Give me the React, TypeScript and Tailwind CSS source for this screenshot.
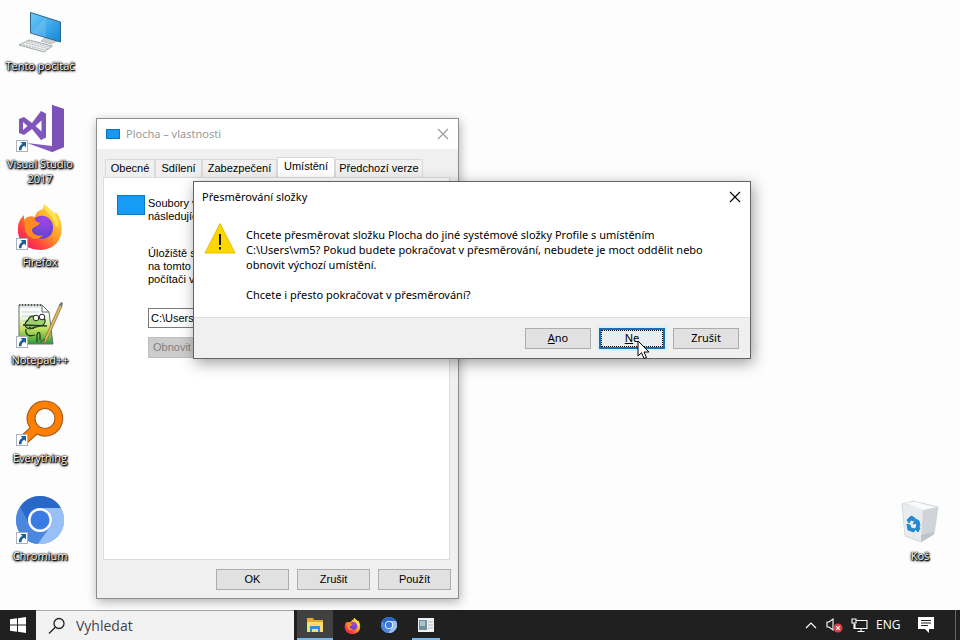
import type { ReactNode } from "react";

const UI_FONT = "font-['Noto_Sans','Open_Sans',sans-serif]";
const LABEL_FONT = "font-['Open_Sans','Noto_Sans',sans-serif]";
const CLASSIC_FONT = "font-['Liberation_Sans',Arial,sans-serif]";

function ShortcutArrow() {
  return (
    <svg viewBox="0 0 12 12" className="absolute bottom-0 left-0 size-3" aria-hidden="true">
      <rect x=".5" y=".5" width="11" height="11" fill="#fff" stroke="#a9b3bd" />
      <path d="M4.500 2h5.500v5.500L8.300 5.700C6.300 6.700 5.400 8 5.500 10.200H3C2.500 7.500 3.800 5.200 6.300 3.800Z" fill="#1f5f9c" />
    </svg>
  );
}

function DesktopIcon({ label, shortcut = true, children }: { label: string; shortcut?: boolean; children: ReactNode }) {
  return (
    <button type="button" className={`flex h-[98px] w-20 shrink-0 flex-col items-center gap-1 ${LABEL_FONT}`}>
      <span className="relative block size-12">
        {children}
        {shortcut && <ShortcutArrow />}
      </span>
      <span className="w-[74px] text-center text-[11px] leading-[15px] text-white [text-shadow:0_0_1px_#000,0_0_2px_#000,1px_1px_2px_#000,1px_1px_1px_#000,0_1px_3px_#000]">
        {label}
      </span>
    </button>
  );
}

function ComputerArt() {
  return (
    <svg viewBox="0 0 48 48" className="size-full" aria-hidden="true">
      <defs>
        <linearGradient id="screen" x1="0" y1="0" x2="1" y2="1">
          <stop offset="0" stopColor="#6ccbfb" />
          <stop offset="1" stopColor="#1487d8" />
        </linearGradient>
      </defs>
      <path d="M31 30l8 2 2 3-6 3-10-3Z" fill="#cdd2d2" stroke="#9aa0a2" strokeWidth=".6" />
      <path d="M14.500 6.500l30 9.500v20l-30-9Z" fill="url(#screen)" stroke="#28658d" strokeWidth="1" />
      <path d="M15 27L30 11.500v20Z" fill="#fff" opacity=".13" />
      <path d="M3 39l10-5 23.500 6-8.500 6Z" fill="#eceeee" stroke="#8d9699" strokeWidth=".8" />
      <path d="M7 39l22 5M10 37l22 5.500M12 35.500L34 41" stroke="#a9b0b2" strokeWidth=".8" strokeDasharray="2 1" fill="none" />
    </svg>
  );
}

function VisualStudioArt() {
  return (
    <svg viewBox="0 0 48 48" className="size-full" aria-hidden="true">
      <path d="M36 1l12 4v38l-12 5-25-9 25 3Z" fill="#8659bd" />
      <path d="M36 1l12 4v38l-12 5Z" fill="#7d52b8" />
      <path fillRule="evenodd" d="M3 15l5-2 8 6L25 7l5 2.500v24L25 36l-9-11-8 6-5-2Zm4 3v8l4.500-4Zm12.500 4 6 5.500v-11Z" fill="#8055b9" />
    </svg>
  );
}

function FirefoxArt({ id }: { id: string }) {
  return (
    <svg viewBox="0 0 48 48" className="size-full" aria-hidden="true">
      <defs>
        <linearGradient id={`${id}-body`} x1=".9" y1=".1" x2=".15" y2=".9">
          <stop offset="0" stopColor="#ffe23f" />
          <stop offset=".45" stopColor="#ff9a25" />
          <stop offset=".75" stopColor="#ff493c" />
          <stop offset="1" stopColor="#ed2065" />
        </linearGradient>
        <radialGradient id={`${id}-globe`} cx=".6" cy=".2" r=".9">
          <stop offset="0" stopColor="#a246e6" />
          <stop offset="1" stopColor="#5145cc" />
        </radialGradient>
      </defs>
      <path d="M28 2c3 5 8 6 10 11l2-3c10 12 8 37-15 38C8 48 1 37 2 26c0-6 3-10 6-13v5c3-4 7-4 11-3 1-5 4-7 8-8Z" fill={`url(#${id}-body)`} />
      <path d="M19 16c9-6 19 1 18 11-1 9-10 12-17 8-5-3-8-9-5-14Z" fill={`url(#${id}-globe)`} />
      <path d="M8 18c3-4 7-4 11-3-1 3 1 5 5 6-2 4-7 3-8 7 0 4 6 7 11 5-5 7-16 4-18-5Z" fill="#ff8b22" />
      <path d="M28 2c0 9 10 11 11 21l3 2C45 15 35 8 28 2Z" fill="#ffe44d" />
    </svg>
  );
}

function NotepadArt() {
  return (
    <svg viewBox="0 0 48 48" className="size-full" aria-hidden="true">
      <defs>
        <linearGradient id="page" x1="0" y1="0" x2="0" y2="1">
          <stop offset=".25" stopColor="#fbfdf8" />
          <stop offset=".65" stopColor="#b7dc55" />
          <stop offset="1" stopColor="#279a36" />
        </linearGradient>
      </defs>
      <path d="M3 5h23l7 7 4 32H3Z" fill="url(#page)" stroke="#68716b" />
      <path d="M26 5v7h7Z" fill="#fff" stroke="#666" />
      <path d="M4 7h21M6 12h17M6 16h12M6 21h7" stroke="#bcc8cf" strokeWidth=".8" />
      <path d="M3 5h23" stroke="#555" strokeWidth="2" strokeDasharray="1 2" />
      <path d="M12 20c2-5 7-5 9-1l5-2c4 1 4 6 1 8l-13 4c-6-1-6-6-2-9Z" fill="#9bd36a" stroke="#242d20" strokeWidth="1.2" />
      <circle cx="20" cy="18" r="2.800" fill="#fff" stroke="#222" />
      <circle cx="26" cy="17" r="2.800" fill="#fff" stroke="#222" />
      <path d="M7 25l24 1M10 29c-1 6 3 8 9 6M21 42v-7c1-4 3-3 3 0v5M13 27c2 2 4 2 6 0" stroke="#253421" fill="none" strokeWidth="1.300" />
      <path d="M44 4l2 2-15 34-3 4 1-6Z" fill="#e4b958" stroke="#86724a" strokeWidth=".8" />
      <path d="M43 5l2-3 2 1-1 4Z" fill="#777" />
      <path d="M24 42l5-3" stroke="#235e2b" />
    </svg>
  );
}

function EverythingArt() {
  return (
    <svg viewBox="0 0 48 48" className="size-full" aria-hidden="true">
      <path fillRule="evenodd" d="M29 3a17.500 17.500 0 1 1-8 33L10 46l-6-7 10-9A17.500 17.500 0 0 1 29 3Zm0 7.500a10 10 0 1 0 0 20 10 10 0 0 0 0-20Z" fill="#ff8000" stroke="#a45c20" strokeWidth="1.200" />
    </svg>
  );
}

function ChromiumArt() {
  return (
    <svg viewBox="0 0 48 48" className="size-full" aria-hidden="true">
      <circle cx="24" cy="24" r="24" fill="#5795eb" />
      <path d="M4 11A24 24 0 0 1 45 12H24a12 12 0 0 0-10 18Z" fill="#2968c9" />
      <path d="M4 11A24 24 0 0 0 21 48l13-17a12 12 0 0 1-20-1Z" fill="#4b87df" />
      <path d="M24 12h21A24 24 0 0 1 22 48l12-17a12 12 0 0 0-10-19Z" fill="#98bff6" />
      <circle cx="24" cy="24" r="12" fill="#fff" />
      <circle cx="24" cy="24" r="9.500" fill="#397be2" />
    </svg>
  );
}

function BinArt() {
  return (
    <svg viewBox="0 0 48 48" className="size-full" aria-hidden="true">
      <path d="M6 8l11-3 25 6-4 27-13 8-16-6Z" fill="#e4e7ea" stroke="#cbd0d4" strokeWidth=".8" />
      <path d="M7 8l20 6-2 31-16-6Z" fill="#e9ecee" />
      <path d="M27 14l15-3-4 27-13 7Z" fill="#d0d4d8" />
      <path d="M9 7l11-1 10 3 10 2-13 3Z" fill="#f9fafb" />
      <path d="M25 39l13-3-1 3-12 7Z" fill="#bfc4c9" />
      <path d="M11 24l4-4 4 2-1 3-3-1-2 3Zm9-1 3 2 1 5-3 1-1-4-3 1Zm-9 5 3 1 1 3 4 1-1 3-6-2Zm8 5 2-3 3 2-2 4Z" fill="#2589cf" stroke="#2589cf" />
    </svg>
  );
}

function CloseButton({ dim = false, label }: { dim?: boolean; label: string }) {
  return (
    <button type="button" aria-label={label} className={`grid h-[30px] w-[30px] place-items-center ${dim ? "text-[#9a9a9a]" : "text-black"}`}>
      <svg viewBox="0 0 12 12" className="size-3" aria-hidden="true">
        <path d="M1 1l10 10M11 1L1 11" stroke="currentColor" strokeWidth="1.100" />
      </svg>
    </button>
  );
}

const TABS = [
  { name: "Obecné", width: "w-[50px]" },
  { name: "Sdílení", width: "w-[47px]" },
  { name: "Zabezpečení", width: "w-[75px]" },
  { name: "Umístění", width: "w-[58px]", active: true },
  { name: "Předchozí verze", width: "w-[88px]" },
];

function PropertiesWindow() {
  return (
    <section aria-label="Plocha – vlastnosti" className={`absolute top-[118px] left-24 flex h-[481px] w-[363px] flex-col border border-[#8e8e8e] bg-[#f0f0f0] text-[11px] text-black shadow-[1px_3px_10px_rgba(0,0,0,.3)] ${CLASSIC_FONT}`}>
      <header className={`flex h-[30px] shrink-0 items-center bg-white pl-[9px] text-[#999] ${UI_FONT}`}>
        <span className="h-[10px] w-[14px] border border-[#0875bf] bg-[#1898f0]" />
        <h2 className="ml-1.5 flex-1">Plocha – vlastnosti</h2>
        <CloseButton dim label="Zavřít vlastnosti" />
      </header>
      <div role="tablist" className="mt-2 ml-2 flex h-5 shrink-0 items-end">
        {TABS.map((tab) => (
          <button
            key={tab.name}
            type="button"
            role="tab"
            aria-selected={!!tab.active}
            className={`${tab.width} border border-b-0 border-[#d9d9d9] whitespace-nowrap ${tab.active ? "h-5 bg-white pb-0.5" : "h-[18px] bg-[#f0f0f0]"}`}
          >
            {tab.name}
          </button>
        ))}
      </div>
      <div className="mr-2 ml-1.5 flex flex-1 flex-col items-start border border-[#dcdcdc] bg-white pt-[17px] pl-[13px]">
        <div className="flex gap-[3px]">
          <span className="h-5 w-7 shrink-0 border border-[#0877c4] bg-[#169cf5]" />
          <p className="pt-0.5 leading-[13px]">Soubory v<br />následujíc</p>
        </div>
        <p className="mt-6 ml-[31px] leading-[13px]">Úložiště s<br />na tomto<br />počítači v</p>
        <input aria-label="Umístění složky" defaultValue="C:\Users" className="mt-[22px] ml-[31px] h-5 w-[290px] border border-[#7a7a7a] bg-white px-0.5" />
        <button type="button" disabled className="mt-[9px] ml-[31px] h-[21px] w-[90px] border border-[#bfbfbf] bg-[#ccc] pl-1 text-left text-[#838383]">Obnovit</button>
      </div>
      <footer className="flex h-[38px] shrink-0 items-center justify-end gap-2 pr-[7px]">
        {["OK", "Zrušit", "Použít"].map((name) => (
          <button key={name} type="button" className="h-[21px] w-[73px] border border-[#adadad] bg-[#e1e1e1]">{name}</button>
        ))}
      </footer>
    </section>
  );
}

function RedirectDialog() {
  return (
    <section role="dialog" aria-label="Přesměrování složky" className="absolute top-[181px] left-[193px] flex h-[178px] w-[558px] flex-col border border-[#636363] bg-white text-[11px] text-black shadow-[2px_4px_14px_rgba(0,0,0,.38)]">
      <header className="flex h-[30px] shrink-0 items-center pl-2">
        <h2 className="flex-1">Přesměrování složky</h2>
        <CloseButton label="Zavřít dialog" />
      </header>
      <div className="flex flex-1 gap-[10px] pt-[10px] pl-[10px]">
        <svg viewBox="0 0 32 32" className="size-8 shrink-0" aria-hidden="true">
          <path d="M16 1.500L31 31H1Z" fill="#fcd800" stroke="#e8bf00" />
          <path d="M16 12v11M16 25v2.500" stroke="#111" strokeWidth="2" />
        </svg>
        <div className="pt-[5px] leading-[15px] whitespace-nowrap">
          <p>Chcete přesměrovat složku Plocha do jiné systémové složky Profile s umístěním<br />C:\Users\vm5? Pokud budete pokračovat v přesměrování, nebudete je moct oddělit nebo<br />obnovit výchozí umístění.</p>
          <p className="mt-[15px]">Chcete i přesto pokračovat v přesměrování?</p>
        </div>
      </div>
      <footer className="flex h-[41px] shrink-0 items-center justify-end gap-2 border-t border-[#dfdfdf] bg-[#f0f0f0] pr-[11px]">
        <button type="button" className="h-[21px] w-[66px] border border-[#adadad] bg-[#e1e1e1]"><u>A</u>no</button>
        <button type="button" className="h-[21px] w-[66px] border-2 border-[#1c6fae] bg-[#e9edf0] shadow-[0_0_0_2px_#d8effc] outline-1 -outline-offset-3 outline-dotted outline-black"><u>N</u>e</button>
        <button type="button" className="h-[21px] w-[66px] border border-[#adadad] bg-[#e1e1e1]">Zrušit</button>
      </footer>
    </section>
  );
}

function TaskButton({ label, state = "idle", children }: { label: string; state?: "idle" | "open" | "active"; children: ReactNode }) {
  return (
    <button
      type="button"
      aria-label={label}
      className={`flex h-full items-center justify-center border-b-2 pt-0.5 ${state === "active" ? "w-9 border-[#76b9ed] bg-[#414141]" : state === "open" ? "mx-1 w-7 border-[#76b9ed]" : "w-9 border-transparent"}`}
    >
      {children}
    </button>
  );
}

function Taskbar() {
  return (
    <nav aria-label="Hlavní panel" className="flex h-[30px] shrink-0 items-center bg-[#202020] text-white">
      <button type="button" aria-label="Start" className="grid h-full w-9 place-items-center">
        <svg viewBox="0 0 16 16" className="size-4" aria-hidden="true">
          <path d="M0 2.300l7-1v6.200H0ZM8 1.200l8-1.100v7.400H8ZM0 8.500h7v6.200l-7-1ZM8 8.500h8v7.400l-8-1.100Z" fill="#fff" />
        </svg>
      </button>
      <label className={`flex h-full w-[258px] items-center gap-[10px] border-t border-[#aaa] bg-[#f2f2f2] pl-3 text-[#444] ${LABEL_FONT}`}>
        <svg viewBox="0 0 18 18" className="size-[18px] shrink-0" aria-hidden="true">
          <circle cx="11" cy="6.500" r="5" fill="none" stroke="#222" strokeWidth="1.300" />
          <path d="M7.300 10.200L1 16.500" stroke="#222" strokeWidth="1.300" />
        </svg>
        <input aria-label="Vyhledat" placeholder="Vyhledat" className="min-w-0 flex-1 bg-transparent text-sm outline-none placeholder:text-[#444]" />
      </label>
      <div className="ml-[3px] flex h-full gap-px">
        <TaskButton label="Průzkumník souborů" state="active">
          <svg viewBox="0 0 18 16" className="h-4 w-[18px]" aria-hidden="true">
            <path d="M1 1h6l1 2h9v12H1Z" fill="#e8ab28" />
            <path d="M1 5h16v10H1Z" fill="#ffdc72" />
            <path d="M4 9h10v6h-2v-3H6v3H4Z" fill="#348ed1" />
          </svg>
        </TaskButton>
        <TaskButton label="Firefox"><span className="block size-[17px]"><FirefoxArt id="taskfox" /></span></TaskButton>
        <TaskButton label="Chromium"><span className="block size-4"><ChromiumArt /></span></TaskButton>
        <TaskButton label="Vlastnosti" state="open">
          <svg viewBox="0 0 16 14" className="h-[14px] w-4" aria-hidden="true">
            <path d="M0 0h16v14H0Z" fill="#eef2f3" />
            <path d="M1 2h8v10H1Z" fill="#71909b" />
            <path d="M2 3h5v5H2Z" fill="#a8c4cd" />
            <path d="M10 4h5M10 7h5M10 10h5" stroke="#b1babd" />
          </svg>
        </TaskButton>
      </div>
      <div className="ml-auto flex h-full items-center">
        <button type="button" aria-label="Skryté ikony" className="mr-[9px]">
          <svg viewBox="0 0 12 8" className="h-2 w-3" aria-hidden="true"><path d="M1 7l5-5 5 5" fill="none" stroke="#fff" strokeWidth="1.200" /></svg>
        </button>
        <button type="button" aria-label="Hlasitost" className="mr-2">
          <svg viewBox="0 0 17 16" className="h-4 w-[17px]" aria-hidden="true">
            <path d="M1 5h2l4-3v11l-4-3H1Z" fill="none" stroke="#fff" strokeWidth="1.100" />
            <circle cx="12" cy="11" r="4.500" fill="#dc3c42" />
            <path d="M10.200 9.200l3.600 3.600m0-3.600l-3.600 3.600" stroke="#fff" strokeWidth="1.200" />
          </svg>
        </button>
        <button type="button" aria-label="Síť" className="mr-2">
          <svg viewBox="0 0 17 15" className="h-[15px] w-[17px]" aria-hidden="true">
            <path d="M5 2.500h11v8H4V6M10 10.500v3M6.500 13.500h7M1 1h4v4H1ZM3 5v6" fill="none" stroke="#fff" strokeWidth="1.100" />
          </svg>
        </button>
        <button type="button" className={`w-6 text-xs ${LABEL_FONT}`}>ENG</button>
        <button type="button" aria-label="Oznámení" className="ml-[17px]">
          <svg viewBox="0 0 18 16" className="h-4 w-[18px]" aria-hidden="true">
            <path d="M1 0h16v12h-5v4l-4-4H1Z" fill="#fff" />
            <path d="M4 3.500h10M4 6h10M4 8.500h7" stroke="#222" />
          </svg>
        </button>
        <button type="button" aria-label="Zobrazit plochu" className="ml-5 h-full w-[5px] border-l border-[#666]" />
      </div>
    </nav>
  );
}

export default function App() {
  return (
    <div className={`relative flex h-screen flex-col overflow-hidden bg-[#fdfdfd] ${UI_FONT}`}>
      <main className="flex min-h-0 flex-1 items-start justify-between">
        <div className="flex flex-col pt-1.5">
          <DesktopIcon label="Tento počítač" shortcut={false}><ComputerArt /></DesktopIcon>
          <DesktopIcon label="Visual Studio 2017"><VisualStudioArt /></DesktopIcon>
          <DesktopIcon label="Firefox"><FirefoxArt id="deskfox" /></DesktopIcon>
          <DesktopIcon label="Notepad++"><NotepadArt /></DesktopIcon>
          <DesktopIcon label="Everything"><EverythingArt /></DesktopIcon>
          <DesktopIcon label="Chromium"><ChromiumArt /></DesktopIcon>
        </div>
        <div className="self-end pb-4">
          <DesktopIcon label="Koš" shortcut={false}><BinArt /></DesktopIcon>
        </div>
      </main>
      <PropertiesWindow />
      <RedirectDialog />
      <Taskbar />
      <svg viewBox="0 0 13 20" className="pointer-events-none absolute top-[340px] left-[637px] h-5 w-[13px]" aria-hidden="true">
        <path d="M1 1v15l3.500-3.300L7 18.500l2.500-1L7 12h5Z" fill="#fff" stroke="#000" />
      </svg>
    </div>
  );
}
